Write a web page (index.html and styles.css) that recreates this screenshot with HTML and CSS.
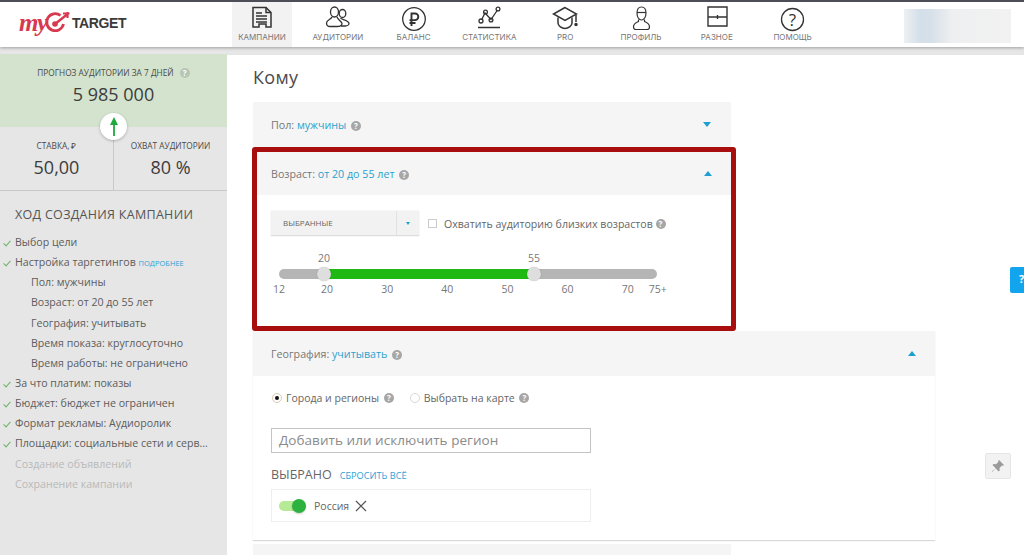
FILE: index.html
```html
<!DOCTYPE html>
<html lang="ru">
<head>
<meta charset="utf-8">
<title>myTarget</title>
<link rel="stylesheet" href="styles.css">
</head>
<body>
<header class="topbar">
  <div class="logo">
    <span class="logo-my">my</span>
    <svg class="logo-target" width="28" height="24" viewBox="0 0 28 24" fill="none" stroke="#d8394f" stroke-width="2.800"><path d="M17.500 4.500A8.500 8.500 0 1 0 20.500 13"/><circle cx="12" cy="13" r="2.800" fill="#d8394f" stroke="none"/><path d="M12 13 24 3.500" stroke-width="2.400"/><path d="M20 2.500h6.500M24.500 1v6" stroke-width="2.200"/></svg>
    <span class="logo-text">TARGET</span>
  </div>
  <nav class="nav">
    <a class="nav-item active"><svg width="26" height="26" viewBox="0 0 26 26" fill="none" stroke="#333" stroke-width="1.500"><path d="M4 1.500h13l5 5V21h-5v-3h-7v3H4z"/><path d="M17 1.500v5h5"/><path d="M7 7h6M7 10h11M7 13h11M7 16h11" stroke-width="1.600"/></svg><span>КАМПАНИИ</span></a>
    <a class="nav-item"><svg width="26" height="26" viewBox="0 0 26 26" fill="none" stroke="#333" stroke-width="1.300"><ellipse cx="9.500" cy="6" rx="4" ry="5"/><ellipse cx="17.500" cy="7.500" rx="3.300" ry="4"/><path d="M7 11c-.5 2-5.500 3-5.500 6 0 2 1.500 3.500 3.500 3.500h7c2.500 0 5-1 5-3 0-2-4-3.500-5-6.500"/><path d="M15.500 12c0 1.500 8.500 2 8.500 5.500 0 1.500-2 2.500-3.500 2.500H16"/></svg><span>АУДИТОРИИ</span></a>
    <a class="nav-item"><svg width="26" height="26" viewBox="0 0 26 26" fill="none" stroke="#333" stroke-width="1.300"><circle cx="13" cy="13" r="11.300"/><path d="M10.500 20V7.500h3.500a3.300 3.300 0 0 1 0 6.600H8.500M8.500 17h6" stroke-width="1.900"/></svg><span>БАЛАНС</span></a>
    <a class="nav-item"><svg width="26" height="26" viewBox="0 0 26 26" fill="none" stroke="#333" stroke-width="1.300"><path d="M5.500 14 9 7l6 6.500L21.500 4"/><circle cx="5" cy="15" r="2"/><circle cx="9.500" cy="6" r="1.900"/><circle cx="15" cy="14" r="1.900"/><circle cx="22" cy="3" r="1.900"/><path d="M2 21.500h22" stroke-width="1.500"/></svg><span>СТАТИСТИКА</span></a>
    <a class="nav-item"><svg width="26" height="26" viewBox="0 0 26 26" fill="none" stroke="#333" stroke-width="1.500"><path d="M13 1.500 1.500 8 13 14.500 24.500 8z"/><path d="M6 11.500v5.500c0 3 4 5.500 7 5.500s7-2.500 7-5.500v-5.500"/><path d="M24 9v7"/><circle cx="24" cy="18.500" r="1" fill="#333"/></svg><span>PRO</span></a>
    <a class="nav-item"><svg width="26" height="26" viewBox="0 0 26 26" fill="none" stroke="#333" stroke-width="1.200"><path d="M9 7c0-4 1.500-6 4.500-6S18 3 18 7s-2 7-4.500 7S9 11 9 7z"/><path d="M9 6.500h9"/><path d="M10.500 13.500v2c-2 1-5 2-5 5.500 0 1.500 1 2.500 2.500 2.500h11c1.500 0 2.500-1 2.500-2.500 0-3.500-3-4.500-5-5.500v-2"/></svg><span>ПРОФИЛЬ</span></a>
    <a class="nav-item"><svg width="26" height="26" viewBox="0 0 26 26" fill="none" stroke="#333" stroke-width="1.400"><path d="M4 1h19v19H4zM4 11h19M13.500 9v4"/></svg><span>РАЗНОЕ</span></a>
    <a class="nav-item"><svg width="26" height="26" viewBox="0 0 26 26" fill="none" stroke="#333" stroke-width="1.300"><circle cx="12.500" cy="13.500" r="11"/><text x="12.500" y="19.500" text-anchor="middle" class="nav-q">?</text></svg><span>ПОМОЩЬ</span></a>
  </nav>
  <div class="account"></div>
</header>
<div class="page">
  <aside class="sidebar">
    <section class="forecast">
      <div class="forecast-title">ПРОГНОЗ АУДИТОРИИ ЗА 7 ДНЕЙ <i class="help help-light">?</i></div>
      <div class="forecast-value">5 985 000</div>
      <div class="arrow-badge"><svg width="10" height="19" viewBox="0 0 10 19"><path d="M5 0 9 8H5.900v11H4.100V8H1z" fill="#1fa83c"/></svg></div>
    </section>
    <section class="stats">
      <div class="stat"><div class="stat-label">СТАВКА, ₽</div><div class="stat-value">50,00</div></div>
      <div class="stat"><div class="stat-label">ОХВАТ АУДИТОРИИ</div><div class="stat-value">80 %</div></div>
    </section>
    <h2 class="steps-title">ХОД СОЗДАНИЯ КАМПАНИИ</h2>
    <ul class="steps">
      <li class="done">Выбор цели</li>
      <li class="done">Настройка таргетингов <a class="more">ПОДРОБНЕЕ</a></li>
      <li class="sub">Пол: мужчины</li>
      <li class="sub">Возраст: от 20 до 55 лет</li>
      <li class="sub">География: учитывать</li>
      <li class="sub">Время показа: круглосуточно</li>
      <li class="sub">Время работы: не ограничено</li>
      <li class="done">За что платим: показы</li>
      <li class="done">Бюджет: бюджет не ограничен</li>
      <li class="done">Формат рекламы: Аудиоролик</li>
      <li class="done">Площадки: социальные сети и серв...</li>
      <li class="todo">Создание объявлений</li>
      <li class="todo">Сохранение кампании</li>
    </ul>
  </aside>
  <main class="main">
    <h1 class="heading">Кому</h1>
    <section class="panel panel-narrow">
      <div class="panel-head">
        <span>Пол: <a class="link">мужчины</a> <i class="help">?</i></span>
        <span class="caret-down"></span>
      </div>
    </section>
    <section class="age-box">
      <div class="panel-head">
        <span>Возраст: <a class="link">от 20 до 55 лет</a> <i class="help">?</i></span>
        <span class="caret-up"></span>
      </div>
      <div class="age-body">
        <div class="age-controls">
          <div class="select"><span class="select-text">ВЫБРАННЫЕ</span><span class="select-btn"></span></div>
          <label class="check"><span class="checkbox"></span>Охватить аудиторию близких возрастов <i class="help">?</i></label>
        </div>
        <div class="slider">
          <div class="slider-values"><span class="sv sv-a">20</span><span class="sv sv-b">55</span></div>
          <div class="track"><div class="track-fill"></div><span class="thumb thumb-a"></span><span class="thumb thumb-b"></span></div>
          <div class="ticks"><span>12</span><span>20</span><span>30</span><span>40</span><span>50</span><span>60</span><span>70</span><span>75+</span></div>
        </div>
      </div>
    </section>
    <section class="panel panel-wide">
      <div class="panel-head panel-head-geo">
        <span>География: <a class="link">учитывать</a> <i class="help">?</i></span>
        <span class="caret-up"></span>
      </div>
      <div class="geo-body">
        <div class="radios">
          <label class="radio"><span class="radio-dot on"></span>Города и регионы <i class="help">?</i></label>
          <label class="radio"><span class="radio-dot"></span>Выбрать на карте <i class="help">?</i></label>
        </div>
        <div class="region-input">Добавить или исключить регион</div>
        <div class="selected-row"><span class="selected-title">ВЫБРАНО</span><a class="reset">СБРОСИТЬ ВСЁ</a></div>
        <div class="selected-box">
          <span class="toggle"><span class="toggle-knob"></span></span>
          <span class="region-name">Россия</span>
          <svg width="12" height="12" viewBox="0 0 12 12" stroke="#555" stroke-width="1.200"><path d="M1 1l10 10M11 1 1 11"/></svg>
        </div>
      </div>
    </section>
    <section class="panel panel-narrow panel-last"></section>
  </main>
</div>
<div class="side-tab">?</div>
<div class="pin"><svg width="14" height="14" viewBox="0 0 14 14" fill="#9a9a9a"><path d="M8 1l5 5-1 .8-1-.3-2.500 2.500.2 2.500-1 1L4.500 9.300 1.500 12.800 1 12.300l3.700-3-3.200-3.200 1-1 2.500.2L7.500 2.800 7.200 1.800z"/></svg></div>
</body>
</html>
```

FILE: styles.css
```css
* { box-sizing: border-box; }
html, body { margin: 0; height: 555px; overflow: hidden; }
body {
  background: #fff;
  font-family: "Open Sans", "Liberation Sans", sans-serif;
  color: #555;
  font-size: 11px;
  position: relative;
}
ul, h1, h2 { margin: 0; padding: 0; }
a { text-decoration: none; }

.topbar {
  height: 47px;
  border-top: 2px solid #4d4d57;
  background: #fff;
  display: flex;
  box-shadow: 0 1px 3px rgba(0,0,0,.3);
  position: relative;
  z-index: 2;
}
.logo { width: 232px; padding: 8px 0 0 19px; display: flex; align-items: flex-start; }
.logo-my {
  font-family: "Liberation Serif", serif;
  font-weight: 700;
  font-style: italic;
  font-size: 25px;
  line-height: 26px;
  color: #d8394f;
  letter-spacing: -1.500px;
  width: 27px;
}
.logo-target { margin: 1px 0 0 -3px; flex: none; }
.logo-text {
  font-family: "Liberation Sans", sans-serif;
  font-weight: 700;
  font-size: 14px;
  line-height: 26px;
  color: #3a3a3a;
  letter-spacing: -.4px;
  margin-left: 1px;
}
.nav { display: flex; gap: 15.800px; }
.nav-item {
  width: 60px;
  display: flex;
  flex-direction: column;
  align-items: center;
  padding-top: 4px;
  height: 45px;
  color: #777;
  font-family: "Inter", "Open Sans", sans-serif;
  font-size: 8px;
  line-height: 10px;
  white-space: nowrap;
}
.nav-item svg { flex: none; }
.nav-item span { width: 80px; text-align: center; }
.nav-item.active { background: #f2f2f2; }
.nav-q { font: 400 17px "Open Sans", sans-serif; fill: #333; stroke: none; }
.account {
  width: 107px;
  height: 34px;
  margin: 7px 0 0 81px;
  background: linear-gradient(90deg, #eef0f3 0, #d3dfe9 15%, #d6e0e9 25%, #eeeff0 45%, #f2f2f2 100%);
}

.page { display: flex; height: 508px; background: #e6e6e6; }
.sidebar { width: 227px; flex: none; padding-top: 7px; }
.forecast {
  height: 73px;
  background: #d3e3cd;
  position: relative;
  text-align: center;
  padding-top: 13px;
  color: #444;
}
.forecast-title { font-size: 8.300px; line-height: 12px; color: #4a4a4a; }
.forecast-value { font-size: 18px; line-height: 24px; margin-top: 3px; color: #3c3c3c; }
.arrow-badge {
  position: absolute;
  left: 100px;
  top: 59px;
  width: 27px;
  height: 27px;
  border-radius: 50%;
  background: #fff;
  box-shadow: 0 1px 3px rgba(0,0,0,.25);
  display: flex;
  align-items: center;
  justify-content: center;
  z-index: 1;
}
.stats { display: flex; height: 64px; border-bottom: 1px solid #c9c9c9; }
.stat { flex: 1; text-align: center; padding-top: 13px; }
.stat:first-child { border-right: 1px solid #c9c9c9; }
.stat-label { font-size: 8.300px; line-height: 12px; color: #4a4a4a; }
.stat-value { font-size: 18px; line-height: 24px; margin-top: 3px; color: #3c3c3c; }
.steps-title {
  font-size: 12.500px;
  font-weight: 400;
  line-height: 18px;
  padding: 15px 0 0 15px;
  color: #555;
  letter-spacing: .3px;
}
.steps { list-style: none; margin-top: 8px; }
.steps li { height: 20.150px; line-height: 20px; padding-left: 15px; position: relative; white-space: nowrap; font-size: 10.600px; color: #5c5c5c; }
.steps li.done::before {
  content: "";
  position: absolute;
  left: 5px;
  top: 7px;
  width: 3px;
  height: 6px;
  border: solid #6fb36a;
  border-width: 0 1.300px 1.300px 0;
  transform: rotate(42deg);
}
.steps li.sub { padding-left: 31px; }
.steps li.todo { color: #b9b9b9; }
.more { color: #2ba3d6; font-size: 7.500px; margin-left: 0; }

.main { flex: 1; background: #fff; margin-top: 8px; padding-left: 26px; min-width: 0; }
.heading { font-size: 18px; font-weight: 400; line-height: 24px; padding-top: 10px; height: 47px; color: #4a4a4a; letter-spacing: .3px; }
.panel-narrow { width: 478px; }
.panel-head {
  height: 45px;
  background: #f5f5f5;
  display: flex;
  align-items: center;
  justify-content: space-between;
  padding: 0 20px 0 18px;
  font-size: 10.700px;
  color: #777;
}
.link { color: #2aa2cf; }
.help {
  display: inline-block;
  width: 10px;
  height: 10px;
  border-radius: 50%;
  background: #a6a6a6;
  color: #fff;
  font-size: 8px;
  line-height: 10px;
  text-align: center;
  font-style: normal;
  font-weight: 700;
  margin-left: 2px;
  vertical-align: 0;
}
.help-light { background: #b7c6b4; margin-left: 4px; }
.caret-down, .caret-up { width: 0; height: 0; border-left: 4.500px solid transparent; border-right: 4.500px solid transparent; }
.caret-down { border-top: 5.500px solid #1f9fd0; }
.caret-up { border-bottom: 5.500px solid #1f9fd0; }

.age-box {
  width: 484px;
  height: 184px;
  margin-left: -1px;
  border: 5px solid #a80e0e;
  border-radius: 3px;
  background: #fff;
}
.age-box .panel-head { height: 43px; padding: 0 19px 0 14px; }
.age-body { padding: 16px 0 0 14px; }
.age-controls { display: flex; align-items: center; height: 25px; }
.select {
  width: 148px;
  height: 25px;
  background: #f2f2f2;
  border-bottom: 1px solid #ddd;
  display: flex;
  justify-content: space-between;
  font-size: 8px;
  line-height: 24px;
  color: #666;
  box-shadow: 0 0 1px rgba(0,0,0,.2);
}
.select-text { padding-left: 12px; }
.select-btn { width: 23px; border-left: 1px solid #e2e2e2; position: relative; }
.select-btn::after {
  content: "";
  position: absolute;
  left: 9px;
  top: 11px;
  border-left: 2.500px solid transparent;
  border-right: 2.500px solid transparent;
  border-top: 3px solid #1f9fd0;
}
.check { display: flex; align-items: center; margin-left: 9px; font-size: 10.600px; color: #666; white-space: pre; }
.checkbox { width: 9px; height: 9px; border: 1px solid #ccc; margin-right: 7px; background: #fff; }
.check .help { margin-left: 0; }

.slider { width: 400px; margin-top: 14px; }
.slider-values { position: relative; height: 16px; font-size: 10.500px; line-height: 16px; color: #777; }
.sv { position: absolute; top: 0; }
.sv-a { left: 47px; }
.sv-b { left: 257px; }
.track { position: relative; height: 10px; margin-left: 8px; width: 378px; background: #b5b5b5; border-radius: 5px; margin-top: 3px; }
.track-fill { position: absolute; left: 45px; width: 211px; top: 0; height: 10px; background: #20b813; }
.thumb { position: absolute; top: -2px; width: 14px; height: 14px; border-radius: 50%; background: #dedede; box-shadow: 0 0 1px rgba(0,0,0,.3); }
.thumb-a { left: 38px; }
.thumb-b { left: 248px; }
.ticks { position: relative; height: 16px; margin-top: 2px; font-size: 10.500px; line-height: 16px; color: #777; display: flex; width: 400px; }
.ticks span { flex: none; text-align: center; width: 24px; margin-right: 36.150px; }
.ticks span:first-child { margin-right: 30px; width: 12px; margin-left: 2px; }
.ticks span:nth-child(7) { margin-right: 6px; }
.ticks span:last-child { margin-right: 0; }

.panel-wide { width: 682px; height: 209px; box-shadow: 0 1px 1px rgba(0,0,0,.15); background: #fff; }
.panel-head-geo { height: 45px; padding-right: 19px; }
.geo-body { padding: 14px 0 0 18px; }
.radios { display: flex; height: 16px; align-items: center; gap: 16px; }
.radio { display: flex; align-items: center; font-size: 10.500px; color: #666; white-space: pre; }
.radio .help { margin-left: 2px; }
.radio-dot { width: 10px; height: 10px; border-radius: 50%; border: 1px solid #d8d8d8; margin-right: 4px; background: #fff; position: relative; margin-left: 1px; }
.radio + .radio .radio-dot { margin-left: 0; }
.radio-dot.on { border-color: #d9cbb0; }
.radio-dot.on::after { content: ""; position: absolute; left: 2px; top: 2px; width: 4px; height: 4px; border-radius: 50%; background: #111; }
.region-input {
  width: 320px;
  height: 25px;
  margin-top: 22px;
  border: 1px solid #c4c4c4;
  padding: 0 7px;
  font-size: 13.500px;
  line-height: 23px;
  color: #8a8a8a;
  letter-spacing: .05px;
}
.selected-row { display: flex; align-items: baseline; gap: 8px; margin-top: 13px; line-height: 18px; height: 18px; }
.selected-title { font-size: 12.500px; color: #666; }
.reset { color: #2ba3d6; font-size: 9.200px; }
.selected-box {
  width: 320px;
  height: 33px;
  margin-top: 5px;
  border: 1px solid #eee;
  display: flex;
  align-items: center;
  padding-left: 7px;
}
.toggle { width: 27px; height: 10px; border-radius: 5px; background: #b6ea95; position: relative; margin-right: 8px; }
.toggle-knob { position: absolute; right: 0; top: -2px; width: 14px; height: 14px; border-radius: 50%; background: #2bb23f; box-shadow: 0 1px 2px rgba(0,0,0,.2); }
.region-name { font-size: 10.500px; color: #666; margin-right: 6px; }
.panel-last { height: 20px; margin-top: 4px; background: #f5f5f5; }

.side-tab {
  position: absolute;
  left: 1010px;
  top: 267px;
  width: 14px;
  height: 26px;
  background: #12a5ee;
  border-radius: 2px 0 0 2px;
  color: #fff;
  font-size: 11px;
  font-weight: 700;
  line-height: 24px;
  padding-left: 9px;
  overflow: hidden;
}
.pin {
  position: absolute;
  left: 985px;
  top: 453px;
  width: 26px;
  height: 26px;
  background: #f2f2f2;
  border: 1px solid #e6e6e6;
  border-radius: 2px;
  display: flex;
  align-items: center;
  justify-content: center;
}
```
